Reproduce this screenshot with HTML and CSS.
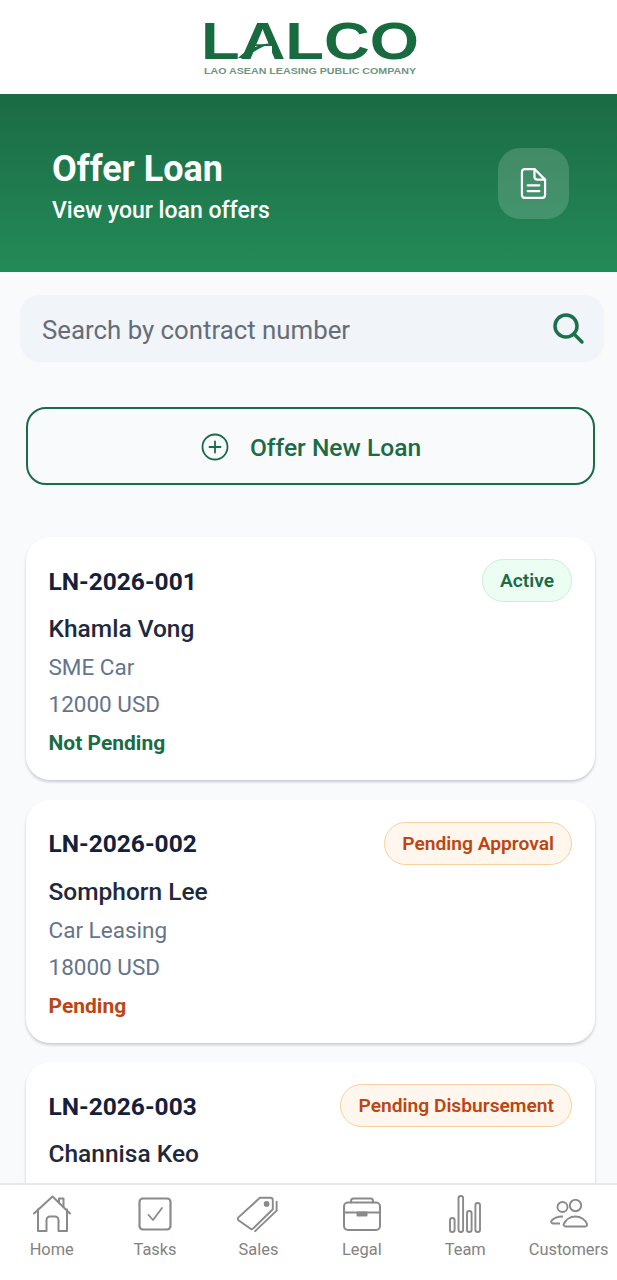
FILE: index.html
```html
<!DOCTYPE html>
<html lang="en">
<head>
<meta charset="utf-8">
<title>Offer Loan</title>
<link rel="stylesheet" href="styles.css">
</head>
<body>
<div class="app">
  <header class="brand">
    <svg class="logo" width="220" height="60" viewBox="0 0 220 60">
      <text class="logo-word" x="1" y="39" textLength="218" lengthAdjust="spacingAndGlyphs">LALCO</text>
      <path d="M55 26h17v9H55z" fill="#fff"/>
      <path d="M38 38C46 30 57 25 71 23C62 27 52 32 45 38z" fill="#176b3f"/>
      <text class="logo-sub" x="4" y="54" textLength="212" lengthAdjust="spacingAndGlyphs">LAO ASEAN LEASING PUBLIC COMPANY</text>
    </svg>
  </header>
  <section class="hero">
    <div class="hero-text">
      <h1 class="hero-title">Offer Loan</h1>
      <p class="hero-sub">View your loan offers</p>
    </div>
    <div class="hero-icon">
      <svg width="27" height="33" viewBox="0 0 28 34" fill="none" stroke="#fff" stroke-width="2.300" stroke-linejoin="round" stroke-linecap="round">
        <path d="M5 2h10l11 11v16a3 3 0 0 1-3 3H5a3 3 0 0 1-3-3V5a3 3 0 0 1 3-3z"/>
        <path d="M15 2v8a3 3 0 0 0 3 3h8"/>
        <path d="M8 19h12M8 25h12"/>
      </svg>
    </div>
  </section>
  <main class="content">
    <div class="search">
      <span class="search-text">Search by contract number</span>
      <svg class="search-icon" width="34" height="34" viewBox="0 0 34 34" fill="none" stroke="#1b7149" stroke-width="3.500" stroke-linecap="round">
        <circle cx="15" cy="15" r="11"/>
        <path d="M23 23l8 8"/>
      </svg>
    </div>
    <button class="offer-btn">
      <svg width="28" height="28" viewBox="0 0 28 28" fill="none" stroke="#1b6b45" stroke-width="1.800" stroke-linecap="round">
        <circle cx="14" cy="14" r="12.500"/>
        <path d="M14 8.500v11M8.500 14h11"/>
      </svg>
      <span>Offer New Loan</span>
    </button>
    <div class="cards">
      <article class="card">
        <div class="card-top">
          <span class="contract">LN-2026-001</span>
          <span class="badge badge-green">Active</span>
        </div>
        <div class="name">Khamla Vong</div>
        <div class="meta">SME Car</div>
        <div class="meta">12000 USD</div>
        <div class="state state-green">Not Pending</div>
      </article>
      <article class="card">
        <div class="card-top">
          <span class="contract">LN-2026-002</span>
          <span class="badge badge-orange">Pending Approval</span>
        </div>
        <div class="name">Somphorn Lee</div>
        <div class="meta">Car Leasing</div>
        <div class="meta">18000 USD</div>
        <div class="state state-orange">Pending</div>
      </article>
      <article class="card">
        <div class="card-top">
          <span class="contract">LN-2026-003</span>
          <span class="badge badge-orange">Pending Disbursement</span>
        </div>
        <div class="name">Channisa Keo</div>
        <div class="meta">SME Car</div>
      </article>
    </div>
  </main>
  <nav class="tabs">
    <div class="tab">
      <div class="tab-icon">
        <svg width="40" height="38" viewBox="0 0 40 38" fill="none" stroke="#8a8a8a" stroke-width="2" stroke-linejoin="round" stroke-linecap="round">
          <path d="M2 18.500L20.500 1.500 38 18.500"/>
          <path d="M27 7.500V3.500h4.500v8.500"/>
          <path d="M6 14.500V36h8.500V25a3.500 3.500 0 0 1 3.500-3.500h5a3.500 3.500 0 0 1 3.500 3.500v11H35V14.500"/>
        </svg>
      </div>
      <span>Home</span>
    </div>
    <div class="tab">
      <div class="tab-icon">
        <svg width="34" height="34" viewBox="0 0 34 34" fill="none" stroke="#8a8a8a" stroke-linejoin="round" stroke-linecap="round">
          <rect x="1.500" y="1.500" width="31" height="31" rx="3.500" stroke-width="2.200"/>
          <path d="M10.500 18l4.500 5 9-12" stroke-width="1.800"/>
        </svg>
      </div>
      <span>Tasks</span>
    </div>
    <div class="tab">
      <div class="tab-icon">
        <svg width="42" height="38" viewBox="0 0 44 38" fill="none" stroke="#8a8a8a" stroke-width="2" stroke-linejoin="round" stroke-linecap="round">
          <path d="M1.500 22.500L24 2h11a2.500 2.500 0 0 1 2.500 2.500V14L17 34a2.500 2.500 0 0 1-3.500 0L1.500 25.500a2 2 0 0 1 0-3z"/>
          <circle cx="31" cy="8.500" r="2" fill="#8a8a8a"/>
          <path d="M41.500 6v9.500L19 37"/>
        </svg>
      </div>
      <span>Sales</span>
    </div>
    <div class="tab">
      <div class="tab-icon">
        <svg width="38" height="34" viewBox="0 0 38 34" fill="none" stroke="#8a8a8a" stroke-width="2" stroke-linejoin="round" stroke-linecap="round">
          <rect x="1" y="5.500" width="36" height="27.500" rx="4"/>
          <path d="M8 5.500V4a2.500 2.500 0 0 1 2.500-2.500h17A2.500 2.500 0 0 1 30 4v1.500"/>
          <path d="M1 15.500h36"/>
          <path d="M14.500 15.500h9v3h-9z" fill="#8a8a8a"/>
        </svg>
      </div>
      <span>Legal</span>
    </div>
    <div class="tab">
      <div class="tab-icon">
        <svg width="32" height="38" viewBox="0 0 32 38" fill="none" stroke="#8a8a8a" stroke-width="1.900">
          <rect x="1" y="23" width="4.600" height="14" rx="2.300"/>
          <rect x="9.500" y="1" width="4.600" height="36" rx="2.300"/>
          <rect x="18" y="16" width="4.600" height="21" rx="2.300"/>
          <rect x="26.400" y="8" width="4.600" height="29" rx="2.300"/>
        </svg>
      </div>
      <span>Team</span>
    </div>
    <div class="tab">
      <div class="tab-icon">
        <svg width="38" height="29" viewBox="0 0 38 29" fill="none" stroke="#8a8a8a" stroke-width="1.900" stroke-linejoin="round">
          <circle cx="12.500" cy="8" r="5"/>
          <circle cx="25.500" cy="6.500" r="5.700"/>
          <path d="M10 24.500H3a1.800 1.800 0 0 1-1.500-2.700C3.500 19 7.500 17.500 13 17.500"/>
          <path d="M15.500 27.500a1.800 1.800 0 0 1-1.800-2.400C15.500 21 20 17.500 25.500 17.500s10 3.500 11.500 7.600a1.800 1.800 0 0 1-1.800 2.400z"/>
        </svg>
      </div>
      <span>Customers</span>
    </div>
  </nav>
</div>
</body>
</html>
```
FILE: styles.css
```css
* { box-sizing: border-box; }
html, body { margin: 0; padding: 0; }
body { font-family: Roboto, "Liberation Sans", sans-serif; background: #f8fafc; }
.app { width: 617px; height: 1280px; display: flex; flex-direction: column; overflow: hidden; position: relative; background: #f8fafc; }
.brand { height: 94px; flex: none; background: #fff; display: flex; justify-content: center; align-items: flex-start; padding-top: 20px; }
.logo { display: block; margin-left: 3px; overflow: visible; }
.logo-word { font-family: "Liberation Sans", sans-serif; font-weight: 700; font-size: 52px; fill: #176b3f; }
.logo-sub { font-family: "Liberation Sans", sans-serif; font-weight: 700; font-size: 9.500px; fill: #6f9580; }
.hero { height: 178px; flex: none; padding: 0 48px 0 52px; display: flex; align-items: center; justify-content: space-between; background: linear-gradient(180deg, #1b6b45, #238a57); }
.hero-text { color: #fff; padding-top: 8px; }
.hero-title { margin: 0; font-size: 36px; line-height: 40px; font-weight: 700; }
.hero-sub { margin: 8px 0 0; font-size: 23px; line-height: 28px; font-weight: 500; }
.hero-icon { width: 71px; height: 71px; border-radius: 22px; background: rgba(255,255,255,.16); display: flex; align-items: center; justify-content: center; }
.content { flex: 1; min-height: 0; padding: 23px 13px 0 20px; }
.search { height: 67px; border-radius: 20px; background: #f1f4f9; display: flex; align-items: center; justify-content: space-between; padding: 2px 19px 0 22px; }
.search-text { font-size: 25.800px; color: #666d78; }
.search-icon { margin-top: -3px; }
.offer-btn { display: flex; align-items: center; justify-content: center; gap: 21px; width: 569px; height: 78px; margin: 45px 0 0 6px; padding: 2px 0 0 1px; border: 2.500px solid #1b6b45; border-radius: 20px; background: transparent; color: #1b6b45; font: 500 24.600px Roboto, sans-serif; }
.cards { margin: 52px 0 0 6px; width: 569px; display: flex; flex-direction: column; gap: 19.500px; }
.card { height: 243px; flex: none; background: #fff; border-radius: 24px; padding: 22px 23px 0 22.500px; box-shadow: 0 2px 3px rgba(15,23,42,.2); }
.card-top { display: flex; justify-content: space-between; align-items: center; height: 43px; }
.contract { font-size: 24.500px; font-weight: 700; color: #15203a; padding-top: 1px; }
.badge { height: 43px; padding: 0 17px; border-radius: 22px; display: flex; align-items: center; font-size: 19.200px; font-weight: 600; border: 1.500px solid; }
.badge-green { background: #ecfdf3; border-color: #c6f1d9; color: #1b6b45; }
.badge-orange { background: #fff7ed; border-color: #f8cf9f; color: #bd4512; }
.name { margin: 10px 0 5px; font-size: 24.500px; line-height: 34px; font-weight: 500; color: #1e293b; }
.meta { margin-top: 4px; font-size: 22.500px; line-height: 33px; color: #64748b; }
.state { margin-top: 7px; font-size: 21px; line-height: 30px; font-weight: 700; }
.state-green { color: #1b6b45; }
.state-orange { color: #bd4512; }
.tabs { position: absolute; left: 0; right: 0; bottom: 0; height: 97px; background: #fff; border-top: 2px solid #e6e8eb; display: grid; grid-template-columns: repeat(6, 103.400px); padding-top: 9px; overflow: hidden; }
.tab { display: flex; flex-direction: column; align-items: center; color: #828282; font-size: 16.400px; font-weight: 400; gap: 7px; white-space: nowrap; }
.tab-icon { height: 39px; display: flex; align-items: center; justify-content: center; }
.tab span { line-height: 20px; }
```
